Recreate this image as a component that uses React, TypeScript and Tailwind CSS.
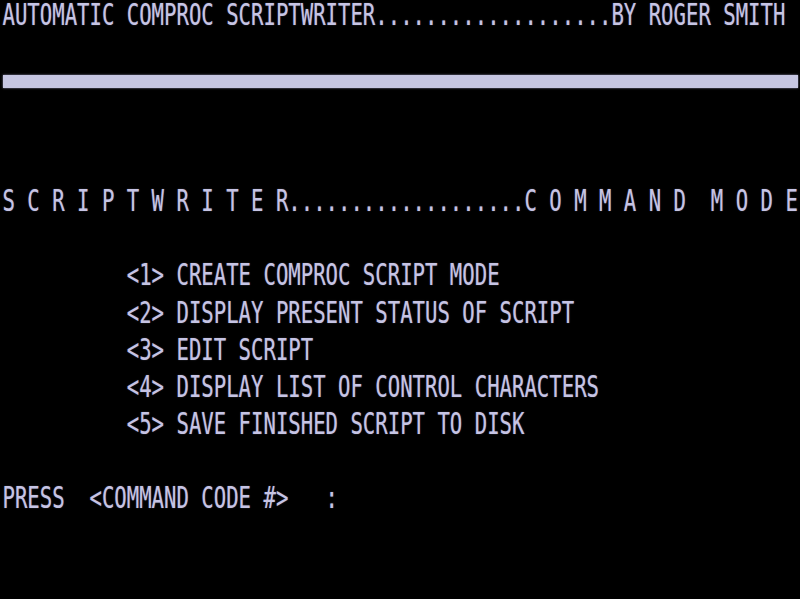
const dots = (n: number) => ".".repeat(n);

const ROWS: (string | null)[] = [
  "AUTOMATIC COMPROC SCRIPTWRITER" + dots(19) + "BY ROGER SMITH",
  "",
  null, // bar
  "",
  "",
  "S C R I P T W R I T E R" + dots(19) + "C O M M A N D  M O D E",
  "",
  "          <1> CREATE COMPROC SCRIPT MODE",
  "          <2> DISPLAY PRESENT STATUS OF SCRIPT",
  "          <3> EDIT SCRIPT",
  "          <4> DISPLAY LIST OF CONTROL CHARACTERS",
  "          <5> SAVE FINISHED SCRIPT TO DISK",
  "",
  "PRESS  <COMMAND CODE #>   :",
  "",
  "",
];

function Row({ text }: { text: string | null }) {
  if (text === null) {
    return (
      <div className="h-[37.2px] pt-[0.6px] pl-[3px] pr-[2px]">
        <div className="h-[13px] bg-[#c6c6e2] shadow-[0_0_2px_#8a8aa8]" />
      </div>
    );
  }
  return (
    <div className="h-[37.2px] pl-[2.5px]">
      <div className="origin-top scale-y-[1.46] whitespace-pre text-[20.65px] leading-[20px] text-[#c6c4e4] [text-shadow:0_0_1px_rgba(180,180,230,0.5)]">
        {text}
      </div>
    </div>
  );
}

export default function App() {
  return (
    <div
      className="flex h-[599px] w-[800px] flex-col overflow-hidden bg-black"
      style={{ fontFamily: '"DejaVu Sans Mono", "Liberation Mono", monospace' }}
    >
      {ROWS.map((r, i) => (
        <Row key={i} text={r} />
      ))}
    </div>
  );
}
